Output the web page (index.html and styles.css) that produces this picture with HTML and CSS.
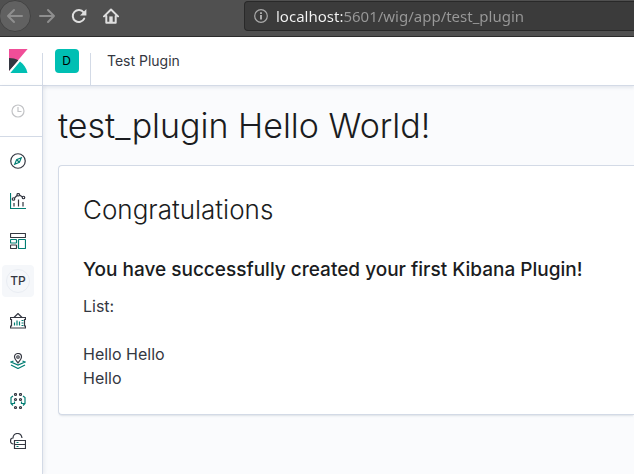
FILE: index.html
```html
<!DOCTYPE html>
<html lang="en">
<head>
<meta charset="utf-8">
<meta name="viewport" content="width=device-width, initial-scale=1">
<title>Test Plugin</title>
<link rel="stylesheet" href="styles.css">
</head>
<body>
<div class="toolbar">
  <button class="tool tool-back" type="button" aria-label="Back"><svg width="18" height="16" viewBox="0 0 18 16"><path d="M16 8H2M8 2L2 8l6 6"/></svg></button>
  <button class="tool tool-forward" type="button" aria-label="Forward"><svg width="18" height="16" viewBox="0 0 18 16"><path d="M2 8h14M10 2l6 6-6 6"/></svg></button>
  <button class="tool" type="button" aria-label="Reload"><svg width="16" height="16" viewBox="0 0 16 16"><path d="M13.2 10.6A6 6 0 1 1 12.6 4.4"/><path class="solid" d="M15.4 1v6.4H9z"/></svg></button>
  <button class="tool" type="button" aria-label="Home"><svg width="16" height="16" viewBox="0 0 16 16"><path d="M1 8.4L8 1.5l7 6.9M3.3 8v6.8h9.4V8"/><path class="solid" d="M6.3 8.4h3.4V15H6.3z"/></svg></button>
  <div class="address">
    <svg width="14" height="14" viewBox="0 0 14 14"><circle cx="7" cy="7" r="6.3"/><path class="thick" d="M7 6v4.4M7 3.3v1.6"/></svg>
    <input class="url" type="text" aria-label="Address" value="localhost:5601/wig/app/test_plugin">
  </div>
</div>
<header class="header">
  <a class="brand" href="#" aria-label="Kibana home"><svg width="19" height="24" viewBox="0 0 19 24"><path fill="#f04e98" d="M0 0h18.6L0 22z"/><path fill="#343741" d="M0 9c3.4 0 6.6.8 9.4 2.2L0 22z"/><path fill="#00bfb3" d="M11 12.5c3.800 2.600 6.500 6.700 7.500 11.500H1.300z"/><path stroke="#fff" stroke-width="1.2" d="M.5 23L10.8 10.9"/></svg></a>
  <div class="space"><button class="avatar" type="button">D</button></div>
  <span class="crumb">Test Plugin</span>
</header>
<div class="shell">
  <nav class="nav" aria-label="Applications">
    <a class="recent" href="#" aria-label="Recently viewed"><svg width="14" height="14" viewBox="0 0 14 14"><circle cx="7" cy="7" r="6"/><path d="M7 3v4.500h3.500"/></svg></a>
    <div class="apps">
      <a class="app" href="#" aria-label="Discover"><svg class="icon" viewBox="0 0 32 32"><circle cx="16" cy="16" r="14.500"/><path class="teal" d="M22.500 9.500l-3.700 9.300-9.300 3.700 3.700-9.300zM14 14l4 4"/></svg></a>
      <a class="app" href="#" aria-label="Visualize"><svg class="icon" viewBox="0 0 32 32"><path class="teal" d="M1 0v31h31"/><path d="M8 20v7M17 13v14M26 18v9M9 10l5-5M19 4l6 4"/><circle cx="7" cy="12" r="2.500"/><circle cx="16.500" cy="3.500" r="2.500"/><circle cx="27" cy="9" r="2.500"/></svg></a>
      <a class="app" href="#" aria-label="Dashboard"><svg class="icon" viewBox="0 0 32 32"><rect x="1" y="1" width="30" height="8" rx="1"/><rect class="teal" x="17" y="13" width="14" height="18" rx="1"/><rect class="teal" x="1" y="13" width="12" height="7" rx="1"/><rect x="1" y="24" width="12" height="7" rx="1"/></svg></a>
      <a class="app active" href="#" aria-label="Test Plugin"><span class="initials">TP</span></a>
      <a class="app" href="#" aria-label="Canvas"><svg class="icon" viewBox="0 0 32 32"><path d="M1 9h30v4h-2v13h2v4H1v-4h2V13H1zM8 9l8-8 8 8"/><path class="teal" d="M9 19v6M14 15v10M19 17v8M23 15h4M23 20h4M23 25h4"/></svg></a>
      <a class="app" href="#" aria-label="Maps"><svg class="icon" viewBox="0 0 32 32"><path d="M16 20c-4-5-7-8-7-12a7 7 0 0 1 14 0c0 4-3 7-7 12z"/><circle cx="16" cy="8" r="2.500"/><path class="teal" d="M7 16l-5 2 14 6 14-6-5-2M2 24l14 7 14-7"/></svg></a>
      <a class="app" href="#" aria-label="Machine Learning"><svg class="icon" viewBox="0 0 32 32"><circle cx="11" cy="3" r="2"/><circle cx="21" cy="3" r="2"/><circle cx="11" cy="13" r="2"/><circle cx="21" cy="13" r="2"/><circle cx="11" cy="29" r="2"/><circle cx="21" cy="29" r="2"/><path class="teal" d="M6 6L2 9v12l4 4M2 21h7v-4M26 6l4 3v12l-4 4M30 21h-7v-4"/></svg></a>
      <a class="app" href="#" aria-label="Infrastructure"><svg class="icon" viewBox="0 0 32 32"><path d="M7 22c-4 0-6-3-6-6 0-4 2-6 5-6 0-6 4-9 9-9s8 3 9 9M9 15h22v16H9zM9 23h22"/><path class="teal" d="M13 19h4M13 27h4"/></svg></a>
    </div>
  </nav>
  <main class="main">
    <h1 class="page-title">test_plugin Hello World!</h1>
    <section class="panel">
      <h2 class="panel-title">Congratulations</h2>
      <h3 class="panel-subtitle">You have successfully created your first Kibana Plugin!</h3>
      <p>List:</p>
      <p class="items">Hello Hello<br>Hello</p>
    </section>
  </main>
</div>
</body>
</html>
```
FILE: styles.css
```css
* { box-sizing: border-box; }
body {
  margin: 0;
  min-height: 100vh;
  display: flex;
  flex-direction: column;
  overflow-x: hidden;
  background: #fafbfd;
  color: #343741;
  font-family: Inter, "Liberation Sans", sans-serif;
  font-size: 16px;
  line-height: 24px;
}
svg { display: block; flex: none; fill: none; }
h1, h2, h3, p { margin: 0; }

.toolbar {
  display: flex;
  align-items: center;
  height: 37px;
  padding-bottom: 4px;
  background: #505050;
  border-bottom: 1px solid #2b2b2b;
}
.tool {
  display: flex;
  align-items: center;
  justify-content: center;
  width: 32px;
  height: 32px;
  padding: 0;
  border: 0;
  background: none;
  color: #dedede;
}
.tool svg { stroke: currentColor; stroke-width: 2; stroke-linecap: round; stroke-linejoin: round; }
.tool .solid { fill: currentColor; stroke: none; }
.tool-back {
  margin-left: -1px;
  border: 1px solid #434343;
  border-radius: 50%;
  background: #616161;
  color: #8e8e8e;
}
.tool-forward { color: #8e8e8e; }
.address {
  display: flex;
  flex: 1;
  align-items: center;
  gap: 8px;
  height: 30px;
  margin-left: 117px;
  padding-left: 9px;
  border: 1px solid #292929;
  border-right: 0;
  border-radius: 4px 0 0 4px;
  background: #3b3b3b;
}
.address svg { stroke: #aaa; stroke-width: 1.2; }
.address .thick { stroke-width: 2; }
.url {
  flex: 1;
  min-width: 0;
  padding: 0;
  border: 0;
  background: linear-gradient(to right, #f5f5f5 68px, #999 68px);
  background-clip: text;
  -webkit-background-clip: text;
  color: transparent;
  font-family: "Noto Sans", sans-serif;
  font-size: 15px;
  line-height: 24px;
}

.header {
  display: flex;
  align-items: stretch;
  height: 49px;
  background: #fff;
  border-bottom: 1px solid #d3dae6;
  box-shadow: 0 2px 3px rgba(152, 162, 179, .2);
}
.brand { display: flex; align-items: center; width: 42px; padding-left: 9px; }
.space {
  display: flex;
  align-items: flex-start;
  justify-content: center;
  width: 49px;
  height: 32px;
  align-self: flex-end;
  border: solid #d3dae6;
  border-width: 0 1px;
}
.avatar {
  width: 24px;
  height: 24px;
  margin-top: -4px;
  padding: 0;
  border: 0;
  border-radius: 4px;
  background: #00bfb3;
  color: #000;
  font: 400 12px/24px Inter, sans-serif;
}
.crumb { align-self: center; padding-left: 16px; font-size: 14px; }

.shell { display: flex; flex: 1; }
.nav {
  flex: none;
  width: 43px;
  background: #fff;
  border-right: 1px solid #d3dae6;
  box-shadow: 2px 0 3px rgba(152, 162, 179, .15);
}
.recent {
  display: flex;
  align-items: center;
  height: 51px;
  padding-left: 11px;
  border-bottom: 1px solid #d3dae6;
}
.recent svg { stroke: #c2c3c6; stroke-width: 1.2; }
.apps { display: grid; gap: 8px; padding: 8px 2px; }
.app {
  display: flex;
  align-items: center;
  justify-content: center;
  width: 32px;
  height: 32px;
  border-radius: 4px;
  color: #343741;
  text-decoration: none;
}
.active { background: #f5f7fa; }
.initials {
  width: 24px;
  height: 24px;
  border: 1px solid #e9edf3;
  border-radius: 50%;
  font-size: 12px;
  font-weight: 500;
  line-height: 22px;
  text-align: center;
}
.icon { width: 16px; height: 16px; stroke: #343741; stroke-width: 2.4; }
.icon .teal { stroke: #017d73; }

.main { flex: 1; min-width: 0; padding: 16px 0 16px 15px; }
.page-title {
  color: #1a1c21;
  font-size: 34px;
  font-weight: 300;
  line-height: 48px;
  white-space: nowrap;
}
.panel {
  margin-top: 15px;
  padding: 24px;
  border: 1px solid #d3dae6;
  border-right: 0;
  border-radius: 4px 0 0 4px;
  background: #fff;
  box-shadow: 0 2px 2px -1px rgba(152, 162, 179, .3);
}
.panel-title {
  color: #1a1c21;
  font-size: 26px;
  font-weight: 300;
  line-height: 40px;
}
.panel-subtitle {
  margin: 24px 0 8px;
  color: #1a1c21;
  font-size: 19px;
  font-weight: 500;
  line-height: 32px;
  white-space: nowrap;
}
.items { margin-top: 24px; }
```
